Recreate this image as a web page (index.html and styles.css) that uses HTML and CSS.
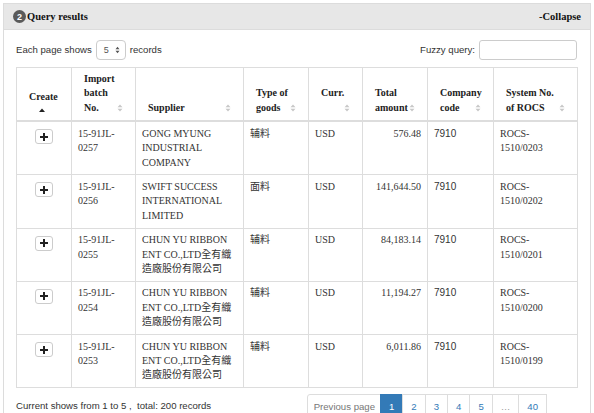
FILE: index.html
```html
<!DOCTYPE html>
<html>
<head>
<meta charset="utf-8">
<link rel="stylesheet" href="styles.css">
</head>
<body>
<div class="panel">
  <div class="panel-heading">
    <div class="title"><span class="badge">2</span>Query results</div>
    <div class="collapse">-Collapse</div>
  </div>
  <div class="panel-body">
    <div class="toolbar">
      <div class="page-size">Each page shows
        <span class="select"><span>5</span>
          <svg width="5" height="8" viewBox="0 0 5 8"><path d="M0.5 3.2 L2.5 0.8 L4.5 3.2 Z M0.5 4.8 L2.5 7.2 L4.5 4.8 Z" fill="#555"/></svg>
        </span> records</div>
      <div class="search">Fuzzy query: <span class="input"></span></div>
    </div>
    <table class="grid">
      <colgroup>
        <col style="width:55px"><col style="width:64px"><col style="width:108px"><col style="width:65px"><col style="width:54px"><col style="width:65px"><col style="width:66px"><col style="width:84px">
      </colgroup>
      <thead>
        <tr>
          <th><div class="th-create"><span>Create</span><svg class="asc" width="6" height="4" viewBox="0 0 6 4"><path d="M0 4 L3 0.5 L6 4 Z" fill="#222"/></svg></div></th>
          <th><div class="th-inner"><span class="txt">Import batch No.</span><svg class="sort" width="6" height="8" viewBox="0 0 6 8"><path d="M0.5 3.3 L3 0.5 L5.5 3.3 Z M0.5 4.7 L3 7.5 L5.5 4.7 Z" fill="#c8c8c8"/></svg></div></th>
          <th><div class="th-inner"><span class="txt">Supplier</span><svg class="sort" width="6" height="8" viewBox="0 0 6 8"><path d="M0.5 3.3 L3 0.5 L5.5 3.3 Z M0.5 4.7 L3 7.5 L5.5 4.7 Z" fill="#c8c8c8"/></svg></div></th>
          <th><div class="th-inner"><span class="txt">Type of goods</span><svg class="sort" width="6" height="8" viewBox="0 0 6 8"><path d="M0.5 3.3 L3 0.5 L5.5 3.3 Z M0.5 4.7 L3 7.5 L5.5 4.7 Z" fill="#c8c8c8"/></svg></div></th>
          <th><div class="th-inner"><span class="txt">Curr.<br>&nbsp;</span><svg class="sort" width="6" height="8" viewBox="0 0 6 8"><path d="M0.5 3.3 L3 0.5 L5.5 3.3 Z M0.5 4.7 L3 7.5 L5.5 4.7 Z" fill="#c8c8c8"/></svg></div></th>
          <th><div class="th-inner"><span class="txt">Total amount</span><svg class="sort" width="6" height="8" viewBox="0 0 6 8"><path d="M0.5 3.3 L3 0.5 L5.5 3.3 Z M0.5 4.7 L3 7.5 L5.5 4.7 Z" fill="#c8c8c8"/></svg></div></th>
          <th><div class="th-inner"><span class="txt">Company code</span><svg class="sort" width="6" height="8" viewBox="0 0 6 8"><path d="M0.5 3.3 L3 0.5 L5.5 3.3 Z M0.5 4.7 L3 7.5 L5.5 4.7 Z" fill="#c8c8c8"/></svg></div></th>
          <th><div class="th-inner"><span class="txt">System No. of ROCS</span><svg class="sort" width="6" height="8" viewBox="0 0 6 8"><path d="M0.5 3.3 L3 0.5 L5.5 3.3 Z M0.5 4.7 L3 7.5 L5.5 4.7 Z" fill="#c8c8c8"/></svg></div></th>
        </tr>
      </thead>
      <tbody>
        <tr>
          <td class="c-btn"><span class="btn"><svg width="8" height="8" viewBox="0 0 8 8"><path d="M3 0 H5 V3 H8 V5 H5 V8 H3 V5 H0 V3 H3 Z" fill="#222"/></svg></span></td>
          <td>15-91JL-0257</td>
          <td>GONG MYUNG INDUSTRIAL COMPANY</td>
          <td>辅料</td>
          <td>USD</td>
          <td class="num">576.48</td>
          <td class="sans">7910</td>
          <td>ROCS-1510/0203</td>
        </tr>
        <tr>
          <td class="c-btn"><span class="btn"><svg width="8" height="8" viewBox="0 0 8 8"><path d="M3 0 H5 V3 H8 V5 H5 V8 H3 V5 H0 V3 H3 Z" fill="#222"/></svg></span></td>
          <td>15-91JL-0256</td>
          <td>SWIFT SUCCESS INTERNATIONAL LIMITED</td>
          <td>面料</td>
          <td>USD</td>
          <td class="num">141,644.50</td>
          <td class="sans">7910</td>
          <td>ROCS-1510/0202</td>
        </tr>
        <tr>
          <td class="c-btn"><span class="btn"><svg width="8" height="8" viewBox="0 0 8 8"><path d="M3 0 H5 V3 H8 V5 H5 V8 H3 V5 H0 V3 H3 Z" fill="#222"/></svg></span></td>
          <td>15-91JL-0255</td>
          <td>CHUN YU RIBBON ENT CO.,LTD全有織造廠股份有限公司</td>
          <td>辅料</td>
          <td>USD</td>
          <td class="num">84,183.14</td>
          <td class="sans">7910</td>
          <td>ROCS-1510/0201</td>
        </tr>
        <tr>
          <td class="c-btn"><span class="btn"><svg width="8" height="8" viewBox="0 0 8 8"><path d="M3 0 H5 V3 H8 V5 H5 V8 H3 V5 H0 V3 H3 Z" fill="#222"/></svg></span></td>
          <td>15-91JL-0254</td>
          <td>CHUN YU RIBBON ENT CO.,LTD全有織造廠股份有限公司</td>
          <td>辅料</td>
          <td>USD</td>
          <td class="num">11,194.27</td>
          <td class="sans">7910</td>
          <td>ROCS-1510/0200</td>
        </tr>
        <tr>
          <td class="c-btn"><span class="btn"><svg width="8" height="8" viewBox="0 0 8 8"><path d="M3 0 H5 V3 H8 V5 H5 V8 H3 V5 H0 V3 H3 Z" fill="#222"/></svg></span></td>
          <td>15-91JL-0253</td>
          <td>CHUN YU RIBBON ENT CO.,LTD全有織造廠股份有限公司</td>
          <td>辅料</td>
          <td>USD</td>
          <td class="num">6,011.86</td>
          <td class="sans">7910</td>
          <td>ROCS-1510/0199</td>
        </tr>
      </tbody>
    </table>
    <div class="footer">
      <div class="info">Current shows from 1 to 5 ,&nbsp; total: 200 records</div>
      <ul class="pagination">
        <li class="disabled">Previous page</li>
        <li class="active">1</li>
        <li>2</li>
        <li>3</li>
        <li>4</li>
        <li>5</li>
        <li class="gap">…</li>
        <li>40</li>
      </ul>
    </div>
  </div>
</div>
</body>
</html>
```

FILE: styles.css
```css
* { box-sizing: border-box; }
html, body { margin: 0; padding: 0; background: #fff; }
body {
  font-family: "Liberation Sans", Arial, sans-serif;
  font-size: 9.6px;
  color: #333;
  width: 594px;
  height: 413px;
  overflow: hidden;
}
.panel {
  margin: 3px 0 0 3px;
  width: 588px;
  border: 1px solid #dcdcdc;
  border-bottom: none;
}
.panel-heading {
  height: 26px;
  background: #e7e7e7;
  border-bottom: 1px solid #dcdcdc;
  display: flex;
  align-items: center;
  justify-content: space-between;
  padding: 0 9px 0 9px;
  font-family: "Liberation Serif", "Times New Roman", serif;
  font-weight: bold;
  font-size: 10.5px;
  color: #111;
}
.title { display: flex; align-items: center; }
.badge {
  width: 13px; height: 13px;
  border-radius: 50%;
  background: #5a5a5a;
  color: #fff;
  font-family: "Liberation Sans", Arial, sans-serif;
  font-size: 9px;
  display: inline-flex;
  align-items: center;
  justify-content: center;
  margin-right: 1px;
}
.panel-body {
  padding: 9px 13px 0 12px;
}
.toolbar {
  display: flex;
  justify-content: space-between;
  align-items: center;
  height: 21px;
  margin-bottom: 7px;
}
.page-size, .search { display: flex; align-items: center; gap: 4px; }
.select {
  width: 30px; height: 20px;
  border: 1px solid #ccc;
  border-radius: 4px;
  display: inline-flex;
  align-items: center;
  justify-content: space-between;
  padding: 0 5px 0 7px;
  font-size: 9px;
  color: #555;
}
.input {
  width: 98px; height: 20px;
  border: 1px solid #ccc;
  border-radius: 3px;
  display: inline-block;
}
table.grid {
  width: 561px;
  table-layout: fixed;
  border-collapse: collapse;
  border: 1px solid #ddd;
  font-family: "Liberation Serif", "Times New Roman", "Noto Sans CJK TC", serif;
  font-size: 10px;
  line-height: 14.4px;
  color: #333;
}
.grid th, .grid td { border: 1px solid #ddd; }
.grid th {
  border-bottom: 2px solid #ddd;
  vertical-align: bottom;
  text-align: left;
  padding: 4px 0 5px 12px;
  font-weight: bold;
  color: #222;
}
.th-inner {
  display: flex;
  align-items: flex-end;
  justify-content: space-between;
  padding-right: 12px;
}
.th-inner .txt { padding-right: 0; min-width: 0; flex: 1 1 auto; }
.th-inner .sort { flex: none; margin-bottom: 3px; }
.th-create {
  display: flex;
  flex-direction: column;
  align-items: flex-start;
}
.th-create .asc { margin: 4px 0 3px 10px; }
.grid td {
  vertical-align: top;
  padding: 4.5px 6px;
  word-wrap: break-word;
}
.grid td.c-btn { text-align: center; padding-top: 7px; }
.btn {
  display: inline-flex;
  width: 18px; height: 15px;
  border: 1px solid #ccc;
  border-radius: 3px;
  background: #fff;
  align-items: center;
  justify-content: center;
}
.grid td.num { text-align: right; }
.grid td.sans { font-family: "Liberation Sans", Arial, sans-serif; }
.footer {
  display: flex;
  align-items: flex-start;
  justify-content: space-between;
  padding-right: 30px;
  margin-top: 6px;
}
.info { padding-top: 6px; }
.pagination {
  list-style: none;
  margin: 0; padding: 0;
  display: flex;
}
.pagination li {
  height: 25px;
  padding: 6px 8px 0;
  border: 1px solid #ddd;
  margin-left: -1px;
  color: #337ab7;
  background: #fff;
}
.pagination li:first-child { border-radius: 3px 0 0 3px; margin-left: 0; }
.pagination li.disabled { color: #777; padding: 6px 5px 0 6px; }
.pagination li.active { background: #337ab7; border-color: #337ab7; color: #fff; }
.pagination li.gap { color: #999; }
```
